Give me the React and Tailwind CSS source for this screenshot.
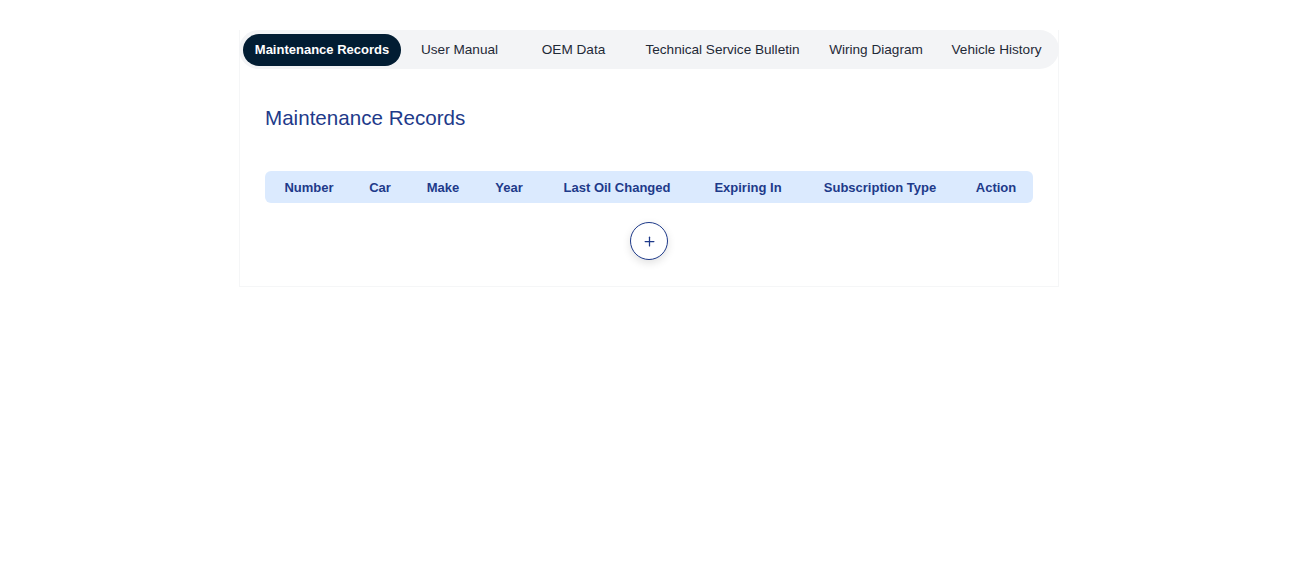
import React, { useState } from "react";
import { Plus } from "lucide-react";

const TABS = [
  { label: "Maintenance Records", w: "w-[158px]" },
  { label: "User Manual", w: "w-[117px]" },
  { label: "OEM Data", w: "w-[111px]" },
  { label: "Technical Service Bulletin", w: "w-[187px]" },
  { label: "Wiring Diagram", w: "w-[120px]" },
  { label: "Vehicle History", w: "w-[121px]" },
];

const COLUMNS = [
  { label: "Number", w: "w-[88px]" },
  { label: "Car", w: "w-[54px]" },
  { label: "Make", w: "w-[72px]" },
  { label: "Year", w: "w-[60px]" },
  { label: "Last Oil Changed", w: "w-[156px]" },
  { label: "Expiring In", w: "w-[106px]" },
  { label: "Subscription Type", w: "w-[158px]" },
  { label: "Action", w: "w-[74px]" },
];

export default function App() {
  const [active, setActive] = useState(0);

  return (
    <div className="min-h-screen bg-white pt-[30px] pl-[6px] flex justify-center font-['Liberation_Sans',Arial,sans-serif]">
      <div className="w-[820px] h-[257px] border-b border-l border-r border-[#f5f6f7] flex flex-col">
        <div className="h-[39px] rounded-full bg-[#f3f4f6] flex items-center pl-[4px] -mx-px">
          {TABS.map((tab, i) => (
            <button
              key={tab.label}
              onClick={() => setActive(i)}
              className={
                i === active
                  ? `${tab.w} h-[32px] rounded-full bg-[#021d33] text-white text-[13px] font-bold flex items-center justify-center`
                  : `${tab.w} h-[32px] pt-[2px] rounded-full text-[#1f2937] text-[13.6px] flex items-center justify-center`
              }
            >
              {tab.label}
            </button>
          ))}
        </div>

        <div className="px-[25px]">
          <h1 className="mt-[35px] text-[20.6px] leading-[28px] text-[#1e3a8a]">Maintenance Records</h1>

          <div className="mt-[39px] h-[32px] rounded-md bg-[#dbeafe] flex items-center pt-px">
            {COLUMNS.map((col) => (
              <div key={col.label} className={`${col.w} text-center text-[13px] font-bold text-[#1e3a8a]`}>
                {col.label}
              </div>
            ))}
          </div>

          <div className="mt-[19px] flex justify-center">
            <button className="w-[38px] h-[38px] rounded-full border border-[#1e3a8a] bg-white shadow-[0_3px_8px_rgba(0,0,0,0.12)] flex items-center justify-center text-[#1e3a8a]">
              <Plus size={15} strokeWidth={2} />
            </button>
          </div>
        </div>
      </div>
    </div>
  );
}
